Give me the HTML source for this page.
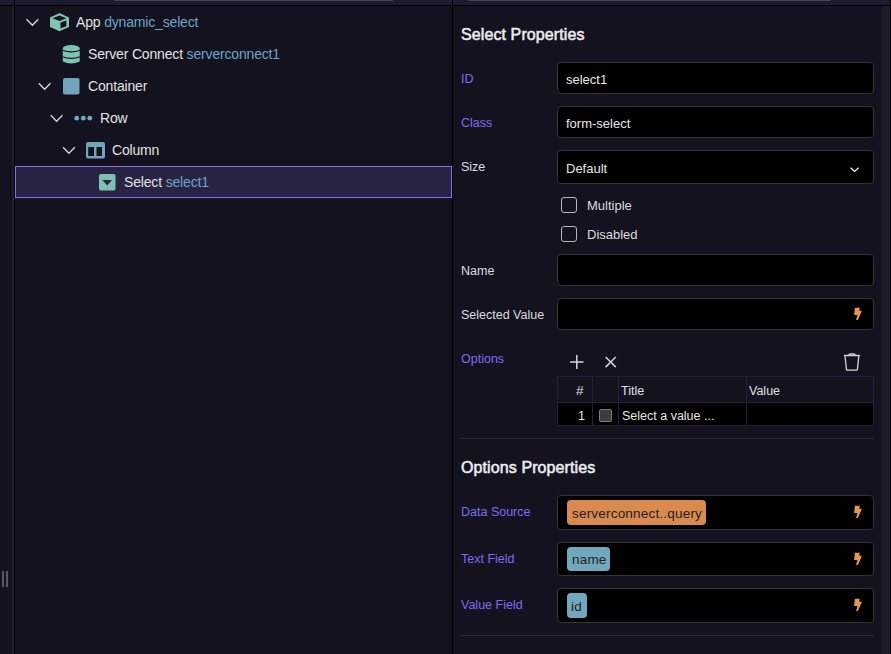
<!DOCTYPE html>
<html><head><meta charset="utf-8">
<style>
*{box-sizing:border-box;margin:0;padding:0}
html,body{width:891px;height:654px;overflow:hidden;background:#14121f;font-family:"Liberation Sans",sans-serif;}
.a{position:absolute}
.t{position:absolute;white-space:pre;line-height:1;}
.tree{font-size:14px;letter-spacing:-0.17px;color:#e2e2e6}
.nm{color:#6aa6c6}
.lbl{font-size:12.5px;color:#dcdcdf}
.cbl{font-size:13px;color:#dcdcdf}
.pl{color:#7e6df0}
.inp{position:absolute;left:557px;width:317px;background:#000;border:1px solid #343438;border-radius:4px}
.itx{font-size:13px;color:#e6e6e6}
.hd{font-size:16px;letter-spacing:0.1px;font-weight:normal;-webkit-text-stroke:0.55px #ececf0;color:#ececf0}
.cb{position:absolute;width:16px;height:16px;border:1.5px solid #b8b8be;border-radius:3px}
.sep{position:absolute;left:461px;width:413px;height:1px;background:#2c2940}
.badge{position:absolute;top:4px;left:9px;height:25px;border-radius:4px;font-size:13.5px;letter-spacing:0.2px;color:#1e1e22;padding:0 5px;line-height:27px;white-space:pre}
.bolt{position:absolute;right:11px;top:8px}
</style></head><body>
<!-- top strip -->
<div class="a" style="left:0;top:0;width:891px;height:5px;background:#1e1b2e"></div>
<div class="a" style="left:114px;top:0;width:279px;height:1px;background:#47445a;border-radius:0 0 2px 2px"></div>
<div class="a" style="left:468px;top:0;width:363px;height:1px;background:#47445a;border-radius:0 0 2px 2px"></div>
<div class="a" style="left:0;top:5px;width:891px;height:1px;background:#000"></div>
<!-- left strip -->
<div class="a" style="left:12px;top:6px;width:2px;height:648px;background:#1f1c33"></div>
<div class="a" style="left:14px;top:0;width:1px;height:654px;background:#000"></div>
<div class="a" style="left:2px;top:571px;width:2px;height:16px;background:#5a5866"></div>
<div class="a" style="left:6px;top:571px;width:2px;height:16px;background:#5a5866"></div>
<!-- divider -->
<div class="a" style="left:452px;top:0;width:1px;height:654px;background:#000"></div>
<!-- right scrollbar -->
<div class="a" style="left:882px;top:6px;width:8px;height:648px;background:#1e1b2e"></div>
<div class="a" style="left:890px;top:0;width:1px;height:654px;background:#000"></div>

<!-- TREE -->
<div class="a" style="left:15px;top:166px;width:437px;height:32px;background:#2a2444;border:1px solid #8470ee"></div>
<svg class="a" style="left:0;top:0" width="452" height="220" viewBox="0 0 452 220">
 <g fill="none" stroke="#d8d8dc" stroke-width="1.3">
  <path d="M26.5,19.2 L32.4,25.2 L38.3,19.2"/>
  <path d="M38.8,83.2 L44.6,89.2 L50.5,83.2"/>
  <path d="M50.8,115.2 L56.6,121.2 L62.5,115.2"/>
  <path d="M63,147.2 L68.9,153.2 L74.8,147.2"/>
 </g>
 <!-- cube -->
 <path fill="#7fc3b3" fill-rule="evenodd" d="M59.5,13 L69,17.5 L69,27 L59.5,31.3 L50,27 L50,17.5 Z M52.5,18.3 L59.5,15.6 L66.4,18.3 L59.5,21.1 Z M60.5,22.4 L66.4,20.5 L66.4,26.3 L60.5,28.3 Z"/>
 <!-- database -->
 <path fill="#7fc3b3" d="M62.8,48.3 A8.45,3.3 0 0 1 79.7,48.3 L79.7,61.5 Q71.25,65.5 62.8,61.5 Z"/>
 <g fill="none" stroke="#14121f" stroke-width="1.2">
  <path d="M62.5,50.3 Q71.25,53.5 80,50.3"/>
  <path d="M62.5,56.7 Q71.25,59.9 80,56.7"/>
 </g>
 <!-- container -->
 <rect x="63" y="78" width="16.5" height="16.5" rx="2" fill="#70a4ba"/>
 <!-- dots -->
 <g fill="#72a8c0"><circle cx="76.7" cy="118.2" r="2.4"/><circle cx="83.3" cy="118.2" r="2.4"/><circle cx="89.8" cy="118.2" r="2.4"/></g>
 <!-- column -->
 <path fill="#70a4ba" fill-rule="evenodd" d="M88,142 H103 Q105,142 105,144 V156.4 Q105,158.4 103,158.4 H88 Q86,158.4 86,156.4 V144 Q86,142 88,142 Z M88.2,147 V156 H94 V147 Z M96.5,147 V156 H102 V147 Z"/>
 <!-- select -->
 <rect x="99" y="174" width="16.5" height="16.6" rx="2" fill="#7dbfb0"/>
 <path fill="#2a2444" d="M102.4,180.1 H112 L107.2,185.4 Z"/>
</svg>
<div class="t tree" style="left:76px;top:15px">App <span class="nm">dynamic_select</span></div>
<div class="t tree" style="left:88px;top:47px">Server Connect <span class="nm">serverconnect1</span></div>
<div class="t tree" style="left:88px;top:79px">Container</div>
<div class="t tree" style="left:100px;top:111px">Row</div>
<div class="t tree" style="left:112px;top:143px">Column</div>
<div class="t tree" style="left:124px;top:175px">Select <span class="nm">select1</span></div>

<!-- RIGHT PANEL -->
<div class="t hd" style="left:461px;top:27px">Select Properties</div>

<div class="t lbl pl" style="left:461px;top:73px">ID</div>
<div class="inp" style="top:62px;height:32px"><div class="t itx" style="left:8px;top:10px">select1</div></div>

<div class="t lbl pl" style="left:461px;top:117px">Class</div>
<div class="inp" style="top:106px;height:32px"><div class="t itx" style="left:8px;top:10px">form-select</div></div>

<div class="t lbl" style="left:461px;top:161px">Size</div>
<div class="inp" style="top:150px;height:34px"><div class="t itx" style="left:8px;top:11px">Default</div>
 <svg class="a" style="left:292px;top:16px" width="10" height="6"><path d="M0.6,0.7 L4.6,4.4 L8.6,0.7" fill="none" stroke="#f0f0f0" stroke-width="1.35"/></svg>
</div>

<div class="cb" style="left:561px;top:197px"></div>
<div class="t cbl" style="left:587px;top:199px">Multiple</div>
<div class="cb" style="left:561px;top:226px"></div>
<div class="t cbl" style="left:587px;top:228px">Disabled</div>

<div class="t lbl" style="left:461px;top:265px">Name</div>
<div class="inp" style="top:254px;height:32px"></div>

<div class="t lbl" style="left:461px;top:309px">Selected Value</div>
<div class="inp" style="top:298px;height:32px">
 <svg class="bolt" width="10" height="14" viewBox="0 0 10 14" style="top:8px;right:10px"><path fill="#e39552" d="M1.9,0.7 L6.8,0.7 L6.2,3.4 L8.9,3.9 L4.9,12.9 L3.1,13 L4.4,8.1 L1.1,8.1 Z"/></svg>
</div>

<div class="t lbl pl" style="left:461px;top:353px">Options</div>
<svg class="a" style="left:560px;top:350px" width="320" height="24">
 <g fill="none" stroke="#d4d4da" stroke-width="1.5">
  <path d="M16.8,5 V19 M10,12 H23.5"/>
  <path d="M45.6,7 L55.8,17.1 M55.8,7 L45.6,17.1"/>
  <path d="M284,5.5 H299.8 M289,5.5 V4.8 Q289,3.8 290,3.8 H294 Q295,3.8 295,4.8 V5.5 M285,6 L286.5,19.5 Q286.7,20.2 287.5,20.2 H296.5 Q297.3,20.2 297.4,19.5 L298.8,6" stroke-width="1.3"/>
 </g>
</svg>
<!-- table -->
<div class="a" style="left:557px;top:376px;width:317px;height:50px;border:1px solid #25213a;background:#14121f"></div>
<div class="a" style="left:558px;top:403px;width:315px;height:22px;background:#000"></div>
<div class="a" style="left:558px;top:402px;width:315px;height:1px;background:#25213a"></div>
<div class="a" style="left:592px;top:377px;width:1px;height:48px;background:#25213a"></div>
<div class="a" style="left:618px;top:377px;width:1px;height:48px;background:#25213a"></div>
<div class="a" style="left:746px;top:377px;width:1px;height:48px;background:#25213a"></div>
<div class="t" style="left:576px;top:384px;font-size:13.5px;color:#e0e0e4">#</div>
<div class="t" style="left:621px;top:385px;font-size:12.5px;color:#e0e0e4">Title</div>
<div class="t" style="left:749px;top:385px;font-size:12.5px;color:#e0e0e4">Value</div>
<div class="t" style="left:578px;top:410px;font-size:12.5px;color:#e6e6e6">1</div>
<div class="a" style="left:599px;top:409px;width:13px;height:13px;background:#3c3c3e;border:1px solid #7a7a80;border-radius:2px"></div>
<div class="t" style="left:622px;top:410px;font-size:12.5px;color:#e6e6e6">Select a value ...</div>

<div class="sep" style="top:438px"></div>

<div class="t hd" style="left:461px;top:460px">Options Properties</div>

<div class="t lbl pl" style="left:461px;top:506px">Data Source</div>
<div class="inp" style="top:495px;height:35px">
 <div class="badge" style="background:#d98a4e;width:139px">serverconnect..query</div>
 <svg class="bolt" width="10" height="14" viewBox="0 0 10 14" style="top:9px;right:10px"><path fill="#e39552" d="M1.9,0.7 L6.8,0.7 L6.2,3.4 L8.9,3.9 L4.9,12.9 L3.1,13 L4.4,8.1 L1.1,8.1 Z"/></svg>
</div>

<div class="t lbl pl" style="left:461px;top:553px">Text Field</div>
<div class="inp" style="top:542px;height:34px">
 <div class="badge" style="background:#72a8be;width:43px;top:4px;height:24px;line-height:26px">name</div>
 <svg class="bolt" width="10" height="14" viewBox="0 0 10 14" style="top:9px;right:10px"><path fill="#e39552" d="M1.9,0.7 L6.8,0.7 L6.2,3.4 L8.9,3.9 L4.9,12.9 L3.1,13 L4.4,8.1 L1.1,8.1 Z"/></svg>
</div>

<div class="t lbl pl" style="left:461px;top:599px">Value Field</div>
<div class="inp" style="top:588px;height:35px">
 <div class="badge" style="background:#72a8be;width:20px;top:4px;height:25px;padding:0 4px">id</div>
 <svg class="bolt" width="10" height="14" viewBox="0 0 10 14" style="top:9px;right:10px"><path fill="#e39552" d="M1.9,0.7 L6.8,0.7 L6.2,3.4 L8.9,3.9 L4.9,12.9 L3.1,13 L4.4,8.1 L1.1,8.1 Z"/></svg>
</div>

<div class="sep" style="top:635px"></div>
</body></html>
